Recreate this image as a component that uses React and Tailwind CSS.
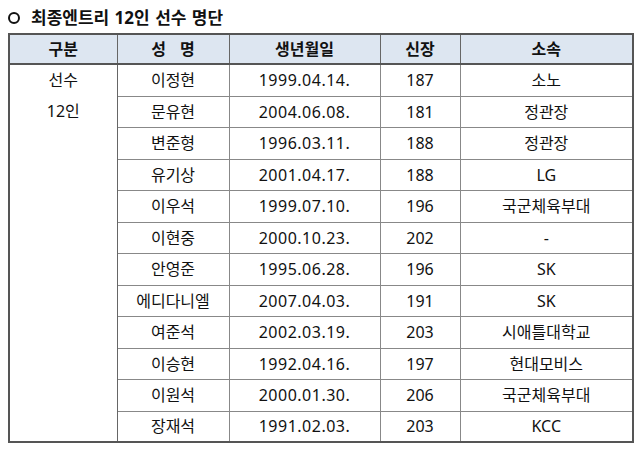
const players = [
  ["이정현", "1999.04.14.", "187", "소노"],
  ["문유현", "2004.06.08.", "181", "정관장"],
  ["변준형", "1996.03.11.", "188", "정관장"],
  ["유기상", "2001.04.17.", "188", "LG"],
  ["이우석", "1999.07.10.", "196", "국군체육부대"],
  ["이현중", "2000.10.23.", "202", "-"],
  ["안영준", "1995.06.28.", "196", "SK"],
  ["에디다니엘", "2007.04.03.", "191", "SK"],
  ["여준석", "2002.03.19.", "203", "시애틀대학교"],
  ["이승현", "1992.04.16.", "197", "현대모비스"],
  ["이원석", "2000.01.30.", "206", "국군체육부대"],
  ["장재석", "1991.02.03.", "203", "KCC"],
];

const font = { fontFamily: '"Noto Sans", "Noto Sans CJK KR", sans-serif' };

export default function App() {
  return (
    <div className="w-[640px] h-[450px] bg-white text-[#111]" style={font}>
      <div className="flex items-center gap-[11px] pl-[8px] pt-[2px] h-[33px] text-[17px] font-bold leading-none">
        <span className="inline-block w-[12px] h-[12px] rounded-full border-[2px] border-[#111]" />
        <span className="pb-[1px] [word-spacing:1px]">최종엔트리 12인 선수 명단</span>
      </div>

      <table className="ml-[8px] w-[626px] border-collapse border-[2px] border-[#555] table-fixed text-[16px] text-center">
        <colgroup>
          <col className="w-[108px]" />
          <col className="w-[112px]" />
          <col className="w-[151px]" />
          <col className="w-[80px]" />
          <col />
        </colgroup>
        <thead>
          <tr className="h-[30px] bg-[#dde6f1] font-bold">
            <th className="border border-[#666] border-b-[2px] border-b-[#555]">구분</th>
            <th className="border border-[#666] border-b-[2px] border-b-[#555] tracking-[14px] pl-[14px]">성명</th>
            <th className="border border-[#666] border-b-[2px] border-b-[#555]">생년월일</th>
            <th className="border border-[#666] border-b-[2px] border-b-[#555]">신장</th>
            <th className="border border-[#666] border-b-[2px] border-b-[#555]">소속</th>
          </tr>
        </thead>
        <tbody>
          {players.map((p, i) => (
            <tr key={p[0]} className={i % 2 === 0 ? "h-[32px]" : "h-[31px]"}>
              {i === 0 ? (
                <td rowSpan={12} className="border border-[#666] align-top leading-[31px]">
                  <div>선수</div>
                  <div>12인</div>
                </td>
              ) : null}
              <td className="border border-[#888]">{p[0]}</td>
              <td className="border border-[#888] tracking-[0.5px]">{p[1]}</td>
              <td className="border border-[#888]">{p[2]}</td>
              <td className="border border-[#888]">{p[3]}</td>
            </tr>
          ))}
        </tbody>
      </table>
    </div>
  );
}
